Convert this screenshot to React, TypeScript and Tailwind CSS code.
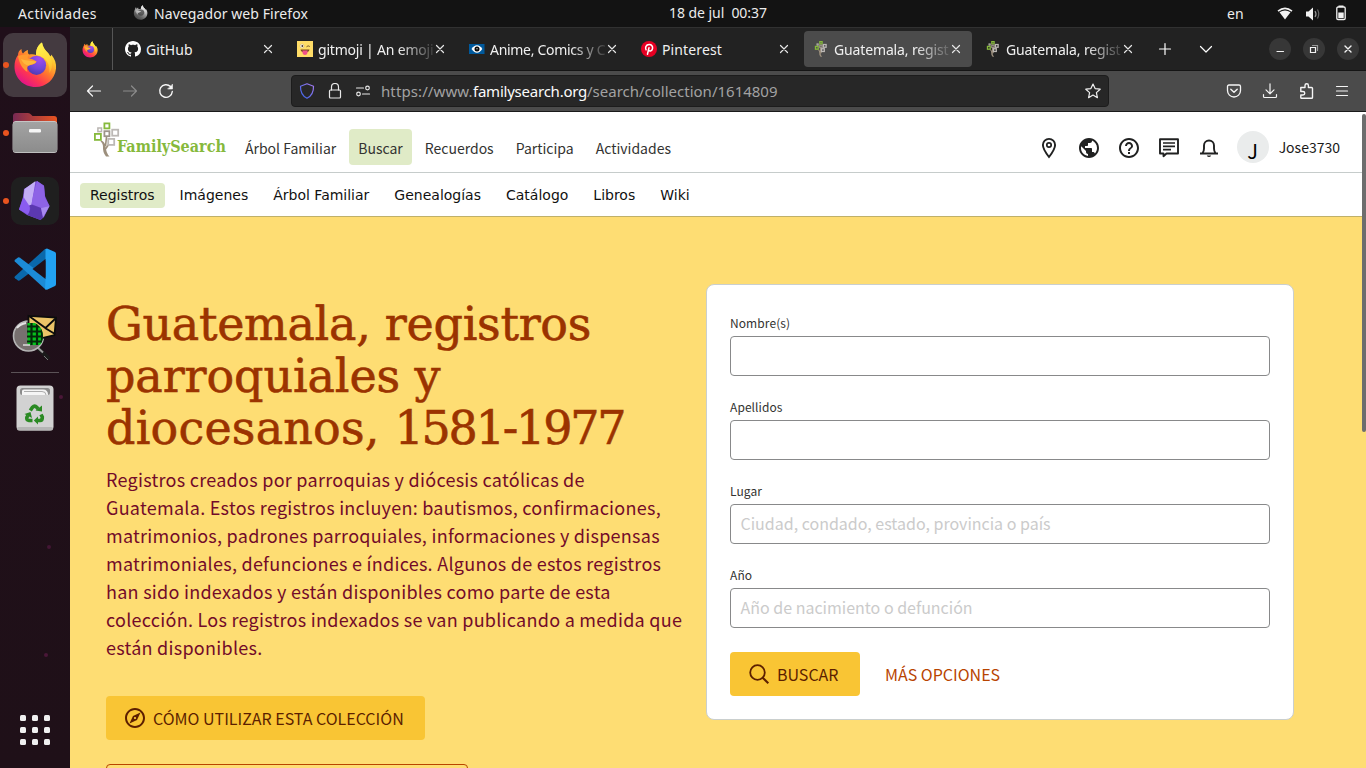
import { useId } from "react";
import type { ReactNode } from "react";
import { MdPublic, MdHelpOutline, MdNotificationsNone, MdOutlineExplore } from "react-icons/md";

const SYSTEM = "font-['Noto_Sans',sans-serif]";
const PAGE = "font-['Noto_Sans_CJK_SC','Noto_Sans',sans-serif]";

/* ---------- logos ---------- */

function FirefoxLogo({ className, mono = false }: { className: string; mono?: boolean }) {
  const id = useId();
  const body = `${id}b`;
  const orb = `${id}o`;
  const flame = `${id}f`;
  return (
    <svg viewBox="0 0 44 46" className={`${className} ${mono ? "grayscale" : ""}`}>
      <defs>
        <linearGradient id={body} x1="0.85" y1="0.1" x2="0.25" y2="0.95">
          <stop offset="0" stopColor="#fff44f" />
          <stop offset="0.25" stopColor="#ffc22e" />
          <stop offset="0.5" stopColor="#ff7a2d" />
          <stop offset="0.75" stopColor="#ff3750" />
          <stop offset="1" stopColor="#e31587" />
        </linearGradient>
        <radialGradient id={orb} cx="0.65" cy="0.15" r="0.9">
          <stop offset="0" stopColor="#a44bf0" />
          <stop offset="0.6" stopColor="#6f46d8" />
          <stop offset="1" stopColor="#4f3aae" />
        </radialGradient>
        <linearGradient id={flame} x1="0.4" y1="0" x2="0.6" y2="1">
          <stop offset="0" stopColor="#fff44f" />
          <stop offset="0.6" stopColor="#ffd93a" />
          <stop offset="1" stopColor="#ffb52e" />
        </linearGradient>
      </defs>
      <path
        d="M5 13 C5 10 6.500 8 8.500 7 C8.500 9 9 10.500 10 11.500 C11.500 9.500 13 8.500 15 8 C14.500 10 15 11.500 16 12.500 C19 12 21 12 23 13 C23 7 25 3 29 0.500 C29.500 5 32 8 35 11 C36 12 36.500 13 37 14.500 C38 14 38.200 13.500 38.300 12.500 C42 17 43.500 21.500 43 26.500 C42 37.500 33 45 22.500 45 C10.500 45 1.500 36 1.500 24.500 C1.500 20 2.700 16 5 13 Z"
        fill={`url(#${body})`}
      />
      <path d="M23 13 C23 7 25 3 29 0.500 C29.500 5 32 8 35 11 C39 16 41 24 36.500 31 C37 22 34 15 23 13 Z" fill={`url(#${flame})`} />
      <circle cx="23.500" cy="23.300" r="9.600" fill={`url(#${orb})`} />
      <path
        d="M5 14 C8 12.500 12 12.500 16 12.500 C15 14 14.500 15 15 16.500 C18 16.500 21 17.500 23.500 19.500 C22.500 22.500 18.500 22.500 15 24 C13.500 25.500 14 28 14.500 30 C9 27 6 20 5 14 Z"
        fill="#ff9a2f"
      />
      <path d="M8 17 C12 18.500 17 18.500 23.500 19.500 C22 22 18.500 22 15.500 23.500 C12 23 9.500 20.500 8 17 Z" fill="#ffb83c" />
    </svg>
  );
}

function FilesLogo() {
  return (
    <svg viewBox="0 0 46 42" className="h-[42px] w-[46px]">
      <defs>
        <linearGradient id="folderBack" x1="0" x2="1">
          <stop offset="0" stopColor="#772953" />
          <stop offset="1" stopColor="#e95420" />
        </linearGradient>
        <linearGradient id="folderFront" x1="0" y1="0" x2="0" y2="1">
          <stop offset="0" stopColor="#a3a3a3" />
          <stop offset="1" stopColor="#8c8c8c" />
        </linearGradient>
      </defs>
      <path d="M1 4 Q1 1 4 1 H16 Q18 1 19 2.500 L20.500 4 H42 Q45 4 45 7 V20 H1 Z" fill="url(#folderBack)" />
      <rect x="0.700" y="9" width="44.600" height="32" rx="3.500" fill="#d0d0d0" />
      <rect x="0.700" y="9.800" width="44.600" height="30.500" rx="3.500" fill="url(#folderFront)" />
      <rect x="17" y="17" width="12" height="3.500" rx="1.200" fill="#f5f5f5" />
    </svg>
  );
}

function ObsidianLogo() {
  return (
    <svg viewBox="0 0 48 48" className="size-12">
      <rect width="48" height="48" rx="10" fill="#1f1f1f" />
      <path d="M26 4 L33 8.500 L34 19 L38.500 29 L33 40 L29.500 43 L16 38 L8 32.500 L12 20 L13 12 Z" fill="#7c4fd8" />
      <path d="M24.500 4 L22 19 L20.500 28 L15 29 L12.500 21 L13.500 12 Z" fill="#c3aef6" />
      <path d="M26 4 L33 9 L34 21 L38.500 29 L30 31 L20.500 27 L22 19 Z" fill="#8d63e6" />
      <path d="M12.500 20 L8 32.500 L17 37.500 Q20 32 17.500 27.500 Z" fill="#8a5cf0" />
      <path d="M20.500 27.500 L30 31 L32 40 L29.500 43 L16.500 38 Q20.500 33 18.500 28.500 Z" fill="#5b38b0" />
      <path d="M30 31 L38.500 29 L32 40.500 Z" fill="#a88af0" />
    </svg>
  );
}

function CodeLogo() {
  return (
    <svg viewBox="0 0 42 42" className="size-[42px]">
      <path d="M0.800 28.500 Q0 29.400 1 30.300 L4 32.500 Q5 33 6 32.300 L34 11 V1 L31 1 Z" fill="#0a68ab" />
      <path d="M0.800 13.500 Q0 12.600 1 11.700 L4 9.500 Q5 9 6 9.700 L34 31 V41 L31 41 Z" fill="#1c8bd6" />
      <path d="M31 41.500 L31.500 31 L31.500 1 L33 0.500 L41 4 Q42 4.600 42 6 V36 Q42 37.400 41 38 L33 41.800 Z" fill="#22a2f2" />
      <path d="M31.500 11 V31 L18.500 21 Z" fill="#1f1019" />
    </svg>
  );
}

function MailLensLogo() {
  return (
    <svg viewBox="0 0 46 46" className="size-[46px]">
      <defs>
        <clipPath id="lens">
          <circle cx="16.500" cy="22" r="14.500" />
        </clipPath>
      </defs>
      <path d="M25 33 L37 45" stroke="#1a1a1a" strokeWidth="4.500" />
      <path d="M24 32 L31 38.500" stroke="#9a9a9a" strokeWidth="2" />
      <path d="M32 42 L36 46" stroke="#777" strokeWidth="1" />
      <circle cx="16.500" cy="22" r="15" fill="#77706f" stroke="#b5b5b5" strokeWidth="1.600" />
      <path d="M16.500 1.800 L44 3.500 L42.500 21 L28 24.500 L16.500 20 Z" fill="#ecc468" stroke="#0c0c0c" strokeWidth="1.800" />
      <path d="M17 2 L33.500 14 L44 4 M33 14 L43 20" fill="none" stroke="#0c0c0c" strokeWidth="1.800" />
      <g clipPath="url(#lens)">
        <rect x="15.500" y="9" width="18" height="22" fill="#06c21c" />
        <path d="M19.500 9 V31 M25 9 V31 M30 9 V31 M15 12.500 H32 M15 17.500 H32 M15 22.500 H32 M15 27.500 H32" stroke="#04290a" strokeWidth="2.200" />
      </g>
      <path d="M5 14 Q8 10 14 9" stroke="#e5e5e5" strokeWidth="1.800" fill="none" />
      <path d="M11 31 H18" stroke="#ddd" strokeWidth="1.500" />
    </svg>
  );
}

function TrashLogo() {
  return (
    <svg viewBox="0 0 38 46" className="h-[46px] w-[38px]">
      <rect x="0.500" y="0.500" width="37" height="45" rx="4" fill="#d2d2d2" />
      <rect x="1" y="42" width="36" height="3.500" rx="1.700" fill="#b5b5b5" />
      <rect x="4" y="3" width="30" height="7" rx="2.500" fill="#8b8b8b" />
      <path d="M6 10 V6 Q6 4.500 8 4.500 H27 Q32 4.500 32 10 Z" fill="#f5f5f5" />
      <path d="M8 6.500 H26 Q30 6.500 30 10" fill="none" stroke="#999" strokeWidth="0.800" />
      <g fill="none" stroke="#2b8a24" strokeWidth="3.600">
        <path d="M14.300 25.500 L16.500 22.200 Q18.700 20 20.700 22.200 L22 24" />
        <path d="M25 29.500 L26.300 32 Q26.500 35.300 24 35.500 L22 35.500" />
        <path d="M16.500 35.500 L13 35.500 Q9.800 35 11 32 L12 30.500" />
      </g>
      <path d="M19.500 25.500 L26 26.500 L26 20.500 Z M22 31.500 V39.500 L17.800 35.500 Z M8.500 29 L14.500 27 L16 33 Z" fill="#2b8a24" />
    </svg>
  );
}

function TreeMark({ className, text = true }: { className: string; text?: boolean }) {
  return (
    <svg viewBox="0 0 26 35" className={className} fill="none">
      <path d="M7.500 18.500 Q11 20 11.500 24 Q12 31 15.500 34.500 H12 Q8.500 30 9 25 Q9 21 6.500 19.500 Z" fill="#9c8f7d" />
      <path d="M12.500 15 L11.500 24 M15 22 L11.500 27" stroke="#9c8f7d" strokeWidth={text ? 1.6 : 3} />
      <g strokeWidth={text ? 1.8 : 2.8}>
        <rect x="10.400" y="1.400" width="5" height="5" stroke="#86b93c" />
        <rect x="3.900" y="6" width="3.600" height="3.600" stroke="#b9b5b1" strokeWidth="1.500" />
        <rect x="10.400" y="9.200" width="5" height="5" stroke="#9c948a" />
        <rect x="18.200" y="7.700" width="6" height="6" stroke="#bcb8b5" />
        <rect x="0.900" y="11.900" width="6" height="6" stroke="#86b93c" />
        <rect x="14.200" y="16.900" width="6" height="6" stroke="#bcb8b5" />
      </g>
    </svg>
  );
}

const GitHubMark = () => (
  <svg viewBox="0 0 16 16" className="size-4" fill="#fff">
    <path d="M8 0C3.580 0 0 3.580 0 8c0 3.540 2.290 6.530 5.470 7.590.4.070.55-.17.55-.38 0-.19-.01-.82-.01-1.490-2.010.37-2.530-.49-2.690-.94-.09-.23-.48-.94-.82-1.130-.28-.15-.68-.52-.01-.53.63-.01 1.080.58 1.230.82.72 1.210 1.870.87 2.330.66.07-.52.28-.87.51-1.070-1.780-.2-3.640-.89-3.640-3.950 0-.87.31-1.590.82-2.150-.08-.2-.36-1.020.08-2.120 0 0 .67-.21 2.200.82.64-.18 1.320-.27 2-.27s1.360.09 2 .27c1.530-1.040 2.200-.82 2.200-.82.44 1.100.16 1.920.08 2.120.51.56.82 1.270.82 2.150 0 3.070-1.870 3.750-3.650 3.950.29.25.54.73.54 1.480 0 1.070-.01 1.930-.01 2.200 0 .21.15.46.55.38A8.013 8.013 0 0 0 16 8c0-4.420-3.580-8-8-8z" />
  </svg>
);

const GitmojiMark = () => (
  <svg viewBox="0 0 16 16" className="size-4">
    <rect width="16" height="16" fill="#ffdd67" />
    <circle cx="5" cy="5" r="2" fill="#fff" stroke="#c9a95a" strokeWidth="0.500" />
    <circle cx="5.300" cy="5" r="0.900" fill="#4a3520" />
    <path d="M9.500 5.800 Q11 4 12.800 5.500" stroke="#7a5b2a" fill="none" />
    <path d="M3.500 8.500 H12.500 Q12 11.500 8 11.500 Q4 11.500 3.500 8.500 Z" fill="#7a4a20" />
    <path d="M5.500 9.500 H10.500 V12 Q10 14 8 14 Q6 14 5.500 12 Z" fill="#f0508a" />
  </svg>
);

const EyeMark = () => (
  <svg viewBox="0 0 16 16" className="size-4">
    <rect x="0" y="3" width="15.500" height="10" fill="#00599c" />
    <path d="M2.500 8 Q5 4.300 8 4.300 Q11 4.300 13.300 8 Q11 11.700 8 11.700 Q5 11.700 2.500 8 Z" fill="#fff" />
    <circle cx="8" cy="8" r="2.500" fill="#0a0a0a" />
    <circle cx="8" cy="7.800" r="0.700" fill="#ddd" />
  </svg>
);

const PinterestMark = () => (
  <svg viewBox="0 0 24 24" className="size-4">
    <circle cx="12" cy="12" r="12" fill="#e60023" />
    <path
      d="M9.700 19.800 L12 10 M7.600 13.200 C6 10.500 7 5.200 12.300 5.200 C16 5.200 17.800 8 17.300 11 C16.700 14.800 13.300 16.200 11.300 14"
      stroke="#fff"
      strokeWidth="2.300"
      fill="none"
      strokeLinecap="round"
    />
  </svg>
);

/* ---------- small glyphs ---------- */

function Glyph({ size, className = "", children }: { size: 12 | 16 | 24; className?: string; children: ReactNode }) {
  const box = size === 12 ? "size-3" : size === 16 ? "size-4" : "size-6";
  return (
    <svg
      viewBox={`0 0 ${size} ${size}`}
      className={`${box} shrink-0 ${className}`}
      fill="none"
      stroke="currentColor"
      strokeWidth="1.200"
      strokeLinecap="round"
      strokeLinejoin="round"
    >
      {children}
    </svg>
  );
}

/* ---------- GNOME shell ---------- */

function TopBar() {
  return (
    <div className={`flex h-[27px] shrink-0 items-center bg-[#131313] text-sm leading-none text-[#ececec] ${SYSTEM}`}>
      <span className="ml-[18px] w-[115px] tracking-[0.38px]">Actividades</span>
      <FirefoxLogo className="-mt-0.5 size-[15px]" mono />
      <span className="ml-1.5 w-[515px] tracking-[0.08px]">Navegador web Firefox</span>
      <span className="w-[558px] pb-px whitespace-pre tracking-[-0.05px]">18 de jul  00:37</span>
      <span className="w-[50px]">en</span>
      <svg viewBox="0 0 16 16" className="size-4" fill="#f2f2f2">
        <path d="M0.500 4.500 Q8 -1.500 15.500 4.500 L14.500 5.800 Q8 0.800 1.500 5.800 Z" />
        <path d="M2.500 6.300 Q8 2.800 13.500 6.300 L8 13.500 Z" />
      </svg>
      <svg viewBox="0 0 16 16" className="ml-3 size-4" fill="#f2f2f2">
        <path d="M1 5.500 H3.500 L8 1.500 V14.500 L3.500 10.500 H1 Z" />
        <path d="M10 5 Q12 8 10 11" stroke="#9a9a9a" fill="none" strokeWidth="1.200" />
        <path d="M12.500 3.500 Q15 8 12.500 12.500" stroke="#666" fill="none" strokeWidth="1.200" />
      </svg>
      <svg viewBox="0 0 16 16" className="-mt-px ml-3 size-4" fill="#f2f2f2">
        <path d="M5.500 0.500 H10.500 V2 H5.500 Z" />
        <rect x="3.800" y="2" width="8.400" height="12.500" rx="1.200" fill="none" stroke="#f2f2f2" strokeWidth="1.300" />
        <rect x="5.300" y="7.500" width="5.400" height="5.500" />
      </svg>
    </div>
  );
}

function DockItem({ running = false, active = false, children }: { running?: boolean; active?: boolean; children: ReactNode }) {
  return (
    <div className="relative flex h-[68px] w-full items-center justify-center">
      {running && <i className="absolute top-[31px] left-[3px] size-1.5 rounded-full bg-[#e9541f]" />}
      <div className={`flex size-16 items-center justify-center rounded-[10px] ${active ? "bg-[#443a40]" : ""}`}>{children}</div>
    </div>
  );
}

function Dock() {
  return (
    <aside className="relative flex w-[70px] shrink-0 flex-col items-center bg-linear-to-b from-[#200f1a] to-[#1f1018] pt-1">
      <i className="absolute top-[368px] left-[59px] size-1 rounded-full bg-[#4a1738]" />
      <i className="absolute top-[518px] left-[47px] size-1 rounded-full bg-[#431634]" />
      <i className="absolute top-[626px] left-[44px] size-1 rounded-full bg-[#4a1738]" />
      <DockItem running active>
        <FirefoxLogo className="h-[46px] w-11" />
      </DockItem>
      <DockItem running>
        <FilesLogo />
      </DockItem>
      <DockItem running>
        <ObsidianLogo />
      </DockItem>
      <DockItem>
        <CodeLogo />
      </DockItem>
      <DockItem>
        <MailLensLogo />
      </DockItem>
      <div className="mt-px h-px w-12 bg-[#5b5257]" />
      <div className="mt-3">
        <TrashLogo />
      </div>
      <div className="mt-auto mb-[23px] grid grid-cols-3 gap-1.5">
        {Array.from({ length: 9 }, (_, i) => (
          <i key={i} className="size-1.5 rounded-[1.5px] bg-[#f0f0f0]" />
        ))}
      </div>
    </aside>
  );
}

/* ---------- browser chrome ---------- */

function Tab({ icon, title, active = false, fade = false }: { icon: ReactNode; title: ReactNode; active?: boolean; fade?: boolean }) {
  return (
    <div className={`flex h-9 w-[168px] shrink-0 items-center rounded pl-[9px] ${active ? "bg-[#4b4b4b]" : ""}`}>
      {icon}
      <span
        className={`mt-px ml-[5px] w-[115px] overflow-hidden text-sm leading-5 whitespace-nowrap text-[#f0f0f0] ${
          fade ? "[mask-image:linear-gradient(to_right,black_70%,transparent_105%)]" : ""
        }`}
      >
        {title}
      </span>
      <Glyph size={12} className="ml-px text-[#e6e6e6]">
        <path d="M2.500 2.500 L9.500 9.500 M9.500 2.500 L2.500 9.500" />
      </Glyph>
    </div>
  );
}

function WindowButton({ children }: { children: ReactNode }) {
  return (
    <span className="flex size-[22px] items-center justify-center rounded-full bg-[#373737] text-[#f2f2f2]">
      <Glyph size={12}>{children}</Glyph>
    </span>
  );
}

function TabStrip() {
  return (
    <div className="flex h-[44px] shrink-0 items-center border-t border-b border-t-[#313131] border-b-[#151515] bg-[#222222]">
      <div className="flex h-full w-[43px] items-center border-r border-[#565656] pl-3">
        <FirefoxLogo className="h-[17px] w-4" />
      </div>
      <div className="ml-[3px] flex gap-1">
        <Tab icon={<GitHubMark />} title="GitHub" />
        <Tab icon={<GitmojiMark />} title={<span className="tracking-[-0.2px]">gitmoji | An emoji</span>} fade />
        <Tab icon={<EyeMark />} title={<span className="tracking-[-0.3px]">Anime, Comics y C</span>} fade />
        <Tab icon={<PinterestMark />} title={<span className="tracking-[0.13px]">Pinterest</span>} />
        <Tab icon={<TreeMark className="h-4 w-4" text={false} />} title={<span className="tracking-[-0.14px]">Guatemala, regist</span>} active fade />
        <Tab icon={<TreeMark className="h-4 w-4" text={false} />} title={<span className="tracking-[-0.14px]">Guatemala, regist</span>} fade />
      </div>
      <Glyph size={16} className="ml-[13px] text-white">
        <path d="M8 2.500 V13.500 M2.500 8 H13.500" />
      </Glyph>
      <Glyph size={16} className="ml-[25px] text-white">
        <path d="M2.500 5.500 L8 11 L13.500 5.500" />
      </Glyph>
      <div className="mr-[7px] ml-auto flex gap-3">
        <WindowButton>
          <path d="M3 8.500 H9.500" />
        </WindowButton>
        <WindowButton>
          <path d="M2.500 4.500 H7.500 V9.500 H2.500 Z" strokeLinejoin="miter" />
          <path d="M4.500 2.500 H9.500 V7.500" stroke="#999" strokeLinejoin="miter" />
        </WindowButton>
        <WindowButton>
          <path d="M3 3 L9 9 M9 3 L3 9" strokeWidth="1.400" />
        </WindowButton>
      </div>
    </div>
  );
}

function Toolbar() {
  return (
    <div className="flex h-[41px] shrink-0 items-center border-b border-[#1a1a1a] bg-[#4b4b4b] text-[#f5f5f5]">
      <Glyph size={16} className="ml-4">
        <path d="M1.500 8 H14.500 M6.500 3 L1.500 8 L6.500 13" />
      </Glyph>
      <Glyph size={16} className="ml-5 text-[#8b8b8b]">
        <path d="M1.500 8 H14.500 M9.500 3 L14.500 8 L9.500 13" />
      </Glyph>
      <Glyph size={16} className="ml-5">
        <path d="M14.300 8.500 A6.300 6.300 0 1 1 12.500 3.600" strokeWidth="1.400" />
        <path d="M14.500 1.500 V6 H10 Z" fill="currentColor" strokeWidth="0.600" />
      </Glyph>
      <div className="ml-[117px] flex h-8 w-[818px] items-center rounded border border-[#1c1c1c] bg-[#272727]">
        <svg viewBox="0 0 16 16" className="ml-[7px] size-4" fill="none">
          <defs>
            <linearGradient id="shield" x1="0" y1="1" x2="1" y2="0">
              <stop offset="0" stopColor="#3563e8" />
              <stop offset="1" stopColor="#a77bf0" />
            </linearGradient>
          </defs>
          <path d="M8 0.800 L14.500 3.200 C14.700 9 12.500 13 8 15.300 C3.500 13 1.300 9 1.500 3.200 Z" stroke="url(#shield)" strokeWidth="1.200" strokeLinejoin="round" />
        </svg>
        <Glyph size={16} className="ml-3 text-[#e8e8e8]">
          <rect x="2.500" y="7" width="11" height="8" rx="1" />
          <path d="M4.500 7 V4 A3.500 3.500 0 0 1 11.500 4 V7" />
        </Glyph>
        <Glyph size={16} className="ml-3 text-[#e8e8e8]">
          <path d="M1.500 5 H8.500 M7.500 11 H14.500" />
          <circle cx="12.500" cy="5" r="1.800" />
          <circle cx="3.500" cy="11" r="1.800" />
        </Glyph>
        <span className={`ml-2.5 flex text-[15px] leading-5 text-[#a2a2a2] ${SYSTEM}`}>
          <span className="w-[92px] tracking-[0.1px]">https://www.</span>
          <span className="w-[114px] tracking-[-0.23px] text-[#fbfbfb]">familysearch.org</span>
          <span>/search/collection/1614809</span>
        </span>
        <Glyph size={16} className="mr-[7px] ml-auto text-[#f0f0f0]">
          <path d="M8 1 L10.100 5.600 L15.200 6.200 L11.400 9.600 L12.400 14.700 L8 12.100 L3.600 14.700 L4.600 9.600 L0.800 6.200 L5.900 5.600 Z" />
        </Glyph>
      </div>
      <div className="mr-4 ml-auto flex gap-5">
        <Glyph size={16}>
          <path d="M1.500 3.500 Q1.500 2 3 2 H13 Q14.500 2 14.500 3.500 V7.500 A6.500 6.500 0 0 1 1.500 7.500 Z" strokeWidth="1.300" />
          <path d="M4.800 6.200 L8 9.300 L11.200 6.200" strokeWidth="1.400" />
        </Glyph>
        <Glyph size={16}>
          <path d="M8 0.800 V10.500 M4 6.800 L8 10.800 L12 6.800 M1.500 11.500 V13.500 Q1.500 14.500 2.500 14.500 H13.500 Q14.500 14.500 14.500 13.500 V11.500" />
        </Glyph>
        <Glyph size={16} className="translate-x-px">
          <path d="M1.800 4.500 H6 V2.500 A1.700 1.700 0 0 1 9.400 2.500 V4.500 H12.500 Q13.500 4.500 13.500 5.500 V14.500 Q13.500 15.300 12.500 15.300 H2.800 Q1.800 15.300 1.800 14.500 V12 H4 A1.700 1.700 0 0 0 4 8.500 H1.800 Z" strokeWidth="1.400" />
        </Glyph>
        <Glyph size={16}>
          <path d="M2.500 3.500 H13.500 M2.500 8 H13.500 M2.500 12.500 H13.500" />
        </Glyph>
      </div>
    </div>
  );
}

/* ---------- site ---------- */

function SiteHeader() {
  const links = ["Árbol Familiar", "Buscar", "Recuerdos", "Participa", "Actividades"];
  return (
    <header className={`flex h-[61px] shrink-0 border-b border-[#c6cccb] ${PAGE}`}>
      <div className="flex pt-2.5 pl-6">
        <TreeMark className="h-[35px] w-[26px]" />
        <span className="mt-[13px] -ml-[3px] w-[119px] font-['DejaVu_Serif_Condensed','DejaVu_Serif',serif] text-base leading-6 font-bold text-[#86b93c]">
          FamilySearch
        </span>
      </div>
      <nav className="mt-[17px] flex h-9 gap-1">
        {links.map((l) => (
          <a key={l} className={`rounded px-[9px] text-sm leading-[39px] text-[#333331] ${l === "Buscar" ? "bg-[#e0ebc7]" : ""}`}>
            {l}
          </a>
        ))}
      </nav>
      <div className="mr-[26px] ml-auto flex h-[72px] items-center gap-4 text-[#202121]">
        <svg viewBox="0 0 24 24" className="size-6" fill="none" stroke="currentColor" strokeWidth="1.900">
          <path d="M12 21 C8.500 16.500 5.900 12.700 5.900 9 A6.100 6.100 0 0 1 18.100 9 C18.100 12.700 15.500 16.500 12 21 Z" />
          <circle cx="12" cy="9" r="2.200" strokeWidth="1.700" />
        </svg>
        <MdPublic className="size-6" />
        <MdHelpOutline className="size-6" />
        <svg viewBox="0 0 24 24" className="size-6" fill="none" stroke="currentColor" strokeWidth="1.900">
          <path d="M3 3.200 H21 V17.500 H9.500 L6.500 20.200 V17.500 H3 Z" strokeLinejoin="round" />
          <path d="M6 7 H18 M6 10.300 H18 M6 13.600 H14" strokeWidth="1.700" />
        </svg>
        <svg viewBox="0 0 24 24" className="size-6" fill="none" stroke="currentColor" strokeWidth="1.900">
          <path d="M3 17.500 H21 M5.500 17 Q7 15.500 7 12.500 V9.500 A5 5 0 0 1 17 9.500 V12.500 Q17 15.500 18.500 17" />
          <path d="M9.800 19.500 H14.200 Q13.500 21 12 21 Q10.500 21 9.800 19.500 Z" fill="currentColor" stroke="none" />
        </svg>
        <div className="-mt-0.5 flex items-center gap-2.5">
          <span className="size-8 rounded-full bg-[#eaecec] text-center text-xl leading-[39px] text-black">J</span>
          <span className="text-sm leading-6 text-[#1a1a1a]">Jose3730</span>
        </div>
      </div>
    </header>
  );
}

function SubNav() {
  const links = ["Registros", "Imágenes", "Árbol Familiar", "Genealogías", "Catálogo", "Libros", "Wiki"];
  return (
    <nav className="flex h-11 shrink-0 gap-[5px] border-b border-[#bfb069] pt-2.5 pl-2.5 font-['DejaVu_Sans',sans-serif] text-sm text-[#111]">
      {links.map((l, i) => (
        <a key={l} className={`h-[25px] rounded px-2.5 leading-[25px] ${i === 0 ? "bg-[#e0ebc7]" : ""}`}>
          {l}
        </a>
      ))}
    </nav>
  );
}

function Field({ label, placeholder }: { label: string; placeholder?: string }) {
  return (
    <label className="mb-[23px] block">
      <span className="mb-[5px] block text-xs leading-4 tracking-[0.08px] text-[#333331]">{label}</span>
      <span className="block h-10 rounded border border-[#88898a] pl-[9.5px] text-base leading-9 text-[#cbcbcb]">{placeholder}</span>
    </label>
  );
}

function SearchCard() {
  return (
    <section className="mt-[67px] h-[436px] w-[588px] rounded-lg border border-[#cacfce] bg-white px-[23px] pt-[30px]">
      <Field label="Nombre(s)" />
      <Field label="Apellidos" />
      <Field label="Lugar" placeholder="Ciudad, condado, estado, provincia o país" />
      <Field label="Año" placeholder="Año de nacimiento o defunción" />
      <div className="mt-6 flex h-11 items-center">
        <button className="flex h-11 w-[130px] items-center rounded bg-[#f9c534] pl-[17px] text-base text-[#5c1f00]">
          <svg viewBox="0 0 24 24" className="size-6" fill="none" stroke="currentColor" strokeWidth="1.800">
            <circle cx="10.500" cy="10.500" r="7.300" />
            <path d="M15.700 15.700 L21.300 21.300" strokeWidth="2.100" />
          </svg>
          <span className="ml-1.5 leading-6">BUSCAR</span>
        </button>
        <span className="ml-[25px] text-base leading-6 text-[#b84400]">MÁS OPCIONES</span>
      </div>
    </section>
  );
}

function Hero() {
  return (
    <main className={`flex min-h-0 grow overflow-hidden bg-[#fedd73] pl-9 ${PAGE}`}>
      <div className="w-[600px] shrink-0 pt-[81px]">
        <h1 className="font-['DejaVu_Serif',serif] text-[46px] leading-[52px] whitespace-nowrap text-[#9b3300] [-webkit-text-stroke:0.6px_#9b3300]">
          <span className="block tracking-[-0.28px]">Guatemala, registros</span>
          <span className="block tracking-[-0.1px]">parroquiales y</span>
          <span className="block">
            <span className="tracking-[0.2px]">diocesanos, </span>
            <span className="tracking-[-2.2px]">1581-1977</span>
          </span>
        </h1>
        <p className="mt-[11px] w-[579px] text-lg leading-7 tracking-[0.268px] text-[#730b29]">
          Registros creados por parroquias y diócesis católicas de Guatemala. Estos registros incluyen: bautismos, confirmaciones,
          matrimonios, padrones parroquiales, informaciones y dispensas matrimoniales, defunciones e índices. Algunos de estos
          registros han sido indexados y están disponibles como parte de esta colección. Los registros indexados se van publicando
          a medida que están disponibles.
        </p>
        <button className="mt-[35px] flex h-11 w-[319px] items-center rounded bg-[#f9c534] pl-[17px] text-base text-[#5c1f00]">
          <MdOutlineExplore className="size-6" />
          <span className="ml-1.5 leading-6">CÓMO UTILIZAR ESTA COLECCIÓN</span>
        </button>
        <div className="mt-6 h-11 w-[362px] rounded border border-[#b84400]" />
      </div>
      <SearchCard />
    </main>
  );
}

export default function App() {
  return (
    <div className="flex h-[768px] w-[1366px] flex-col overflow-hidden bg-[#131313]">
      <TopBar />
      <div className="flex min-h-0 grow">
        <Dock />
        <div className={`flex min-w-0 grow flex-col ${SYSTEM}`}>
          <TabStrip />
          <Toolbar />
          <div className="relative flex min-h-0 grow flex-col bg-white">
            <SiteHeader />
            <SubNav />
            <Hero />
            <div className="absolute top-0.5 right-0 h-[318px] w-1 rounded-full bg-[#6d6d6d]" />
          </div>
        </div>
      </div>
    </div>
  );
}
